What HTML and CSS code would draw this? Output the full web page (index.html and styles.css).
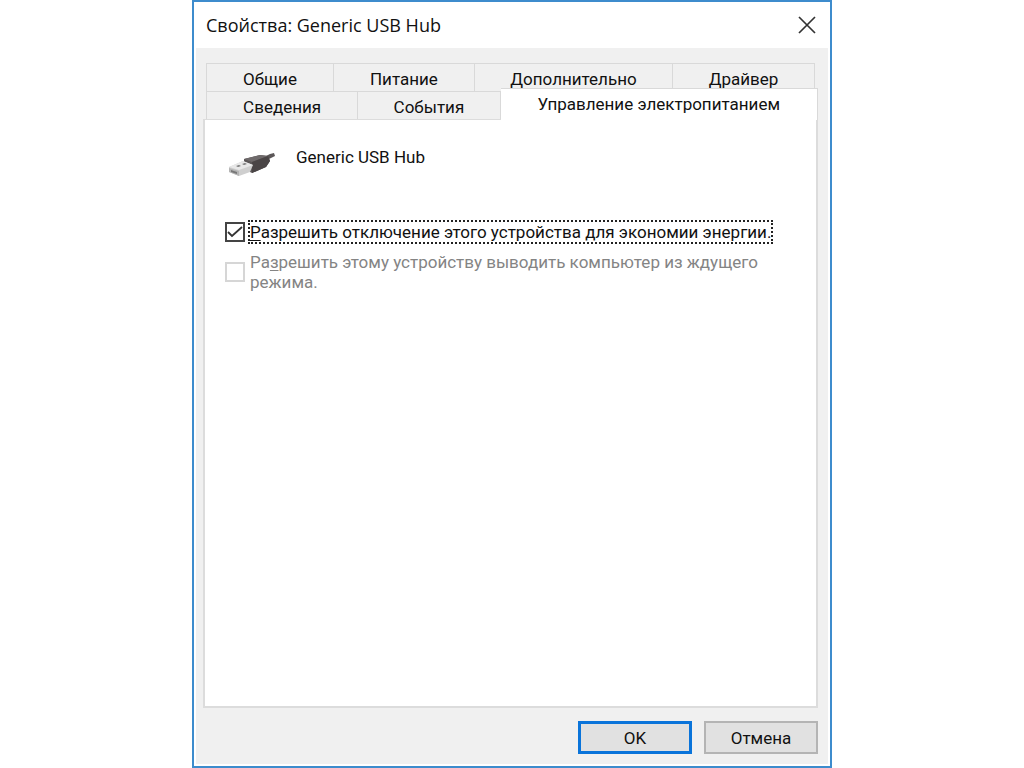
FILE: index.html
```html
<!DOCTYPE html>
<html lang="ru">
<head>
    <meta charset="UTF-8">
    <meta name="viewport" content="width=device-width, initial-scale=1.0">
    <title>Свойства: Generic USB Hub</title>
    <link rel="stylesheet" href="styles.css">
</head>
<body>
    <div class="window">
        <header class="titlebar">
            <h1>Свойства: Generic USB Hub</h1>
            <button class="close" type="button" aria-label="Закрыть">
                <svg width="18" height="18" viewBox="0 0 18 18">
                    <path d="M1 1L17 17M17 1L1 17" stroke="#333" stroke-width="1.7" fill="none"/>
                </svg>
            </button>
        </header>
        <main class="content">
            <div class="tabs" role="tablist">
                <div class="tab-row">
                    <button class="tab general" type="button" role="tab">Общие</button>
                    <button class="tab power" type="button" role="tab">Питание</button>
                    <button class="tab advanced" type="button" role="tab">Дополнительно</button>
                    <button class="tab driver" type="button" role="tab">Драйвер</button>
                </div>
                <div class="tab-row front">
                    <button class="tab details" type="button" role="tab">Сведения</button>
                    <button class="tab events" type="button" role="tab">События</button>
                    <button class="tab active" type="button" role="tab" aria-selected="true">Управление электропитанием</button>
                </div>
            </div>
            <section class="panel" role="tabpanel">
                <div class="device">
                    <svg class="usb" width="48" height="28" viewBox="0 0 48 28">
                        <path d="M36 5L42 2L46 1L47 4L43 6L37 9Z" fill="#5b5758"/>
                        <path d="M16 7L32 3L40 4L42 9L38 15L24 21L16 17Z" fill="#5b5657"/>
                        <path d="M16 7L32 3L40 4L24 10Z" fill="#6f6a6b"/>
                        <path d="M24 10L40 4L42 9L38 15L24 21Z" fill="#4a4546"/>
                        <path d="M1 15L15 9L25 13L22 20L11 24L1 20Z" fill="#cfcfcf"/>
                        <path d="M1 15L15 9L25 13L11 18Z" fill="#e8e8e8"/>
                        <path d="M1 16L11 19L11 24L1 20Z" fill="#b4b4b4"/>
                        <path d="M3 18L9 20L9 22L3 20Z" fill="#777"/>
                        <path d="M8 14L11 13L13 14L10 15ZM14 12L17 11L19 12L16 13Z" fill="#777"/>
                    </svg>
                    <span>Generic USB Hub</span>
                </div>
                <div class="option">
                    <input type="checkbox" id="allow-off" checked>
                    <label class="focused" for="allow-off"><u>Р</u>азрешить отключение этого устройства для экономии энергии.</label>
                </div>
                <div class="option disabled">
                    <input type="checkbox" id="allow-wake" disabled>
                    <label for="allow-wake">Ра<u>з</u>решить этому устройству выводить компьютер из ждущего режима.</label>
                </div>
            </section>
            <footer class="buttons">
                <button class="btn default" type="button">OK</button>
                <button class="btn" type="button">Отмена</button>
            </footer>
        </main>
    </div>
</body>
</html>
```
FILE: styles.css
```css
* {
    box-sizing: border-box;
}
body {
    margin: 0;
    background: #fff;
    color: #111;
    font-family: Roboto, "Liberation Sans", Arial, sans-serif;
    font-size: 17px;
    line-height: 20px;
}
button {
    font: inherit;
    color: inherit;
}
.window {
    display: flex;
    flex-direction: column;
    width: 62.5%;
    min-height: 100vh;
    margin: 0 auto;
    border: 2px solid #3d8ccd;
    background: #fff;
}
.titlebar {
    display: flex;
    align-items: center;
    justify-content: space-between;
    height: 46px;
    padding: 0 14px 0 12px;
}
.titlebar h1 {
    margin: 0;
    font-family: "Open Sans", "Noto Sans", sans-serif;
    font-size: 18px;
    font-weight: normal;
}
.close {
    display: flex;
    padding: 0;
    border: 0;
    background: none;
}
.content {
    display: flex;
    flex: 1;
    flex-direction: column;
    margin: 0 2px 2px;
    padding: 15px 10px 10px 7px;
    background: #f0f0f0;
}
.tabs {
    margin-left: 3px;
}
.tab-row {
    display: flex;
    padding-right: 3px;
}
.tab-row.front {
    padding-right: 0;
}
.tab {
    flex: 1 1 0;
    height: 28px;
    padding: 2px 0 0;
    border: 1px solid #d9d9d9;
    border-bottom: 0;
    background: #f0f0f0;
    white-space: nowrap;
}
.tab + .tab {
    border-left: 0;
}
.general {
    flex-grow: 127;
}
.power {
    flex-grow: 141;
}
.advanced {
    flex-grow: 199;
}
.driver {
    flex-grow: 142;
}
.details {
    flex-grow: 151;
}
.events {
    flex-grow: 142;
}
.tab.active {
    position: relative;
    flex-grow: 318;
    height: 32px;
    margin: -3px 0 -1px;
    padding-bottom: 3px;
    background: #fff;
}
.panel {
    flex: 1;
    padding: 27px 20px 20px;
    border: 2px solid #dcdcdc;
    border-top-width: 1px;
    background: #fff;
}
.device {
    display: flex;
    gap: 20px;
    margin-bottom: 40px;
    padding-left: 3px;
}
.usb {
    margin-top: 5px;
}
.option {
    display: flex;
    align-items: center;
    gap: 3px;
    margin-bottom: 8px;
}
.option input {
    flex: none;
    appearance: none;
    width: 20px;
    height: 20px;
    margin: 0;
    border: 2px solid #444;
    background: #fff;
}
.option input:checked {
    background: url("data:image/svg+xml,%3Csvg xmlns='http://www.w3.org/2000/svg' viewBox='0 0 16 16'%3E%3Cpath d='M1 8L5 12L15 3' fill='none' stroke='%23333' stroke-width='1.8'/%3E%3C/svg%3E") center / 16px 16px no-repeat;
}
.option label {
    padding: 0 2px;
}
.option u {
    text-underline-offset: 2px;
}
.option .focused {
    border: 2px dotted #222;
    padding: 0;
    white-space: nowrap;
}
.option.disabled {
    color: #848484;
}
.option.disabled input {
    border-color: #d6d6d6;
}
.buttons {
    display: flex;
    justify-content: flex-end;
    gap: 12px;
    padding-top: 13px;
}
.btn {
    width: 114px;
    height: 33px;
    padding: 0;
    border: 2px solid #b4b4b4;
    background: #e1e1e1;
}
.btn.default {
    border: 3px solid #0a74da;
}
```
